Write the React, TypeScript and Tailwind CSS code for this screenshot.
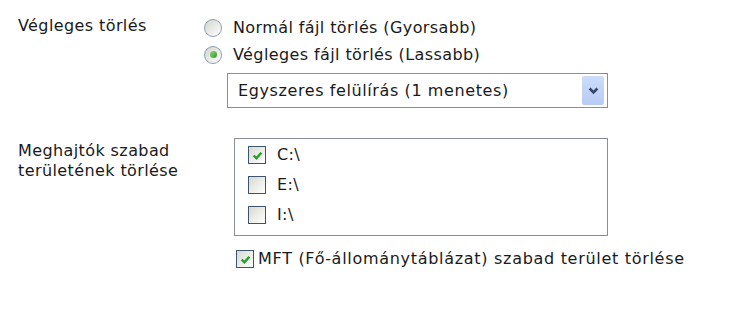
import * as React from "react";

function Radio({ checked }: { checked?: boolean }) {
  return (
    <span className="flex size-[18px] shrink-0 items-center justify-center rounded-full border border-[#8aa0b6] bg-gradient-to-br from-[#d4d4cc] to-white">
      {checked && (
        <span className="size-[7px] rounded-full bg-gradient-to-br from-[#8ad878] to-[#2a9a1e]" />
      )}
    </span>
  );
}

function Check({ checked }: { checked?: boolean }) {
  return (
    <span className="flex size-[18px] shrink-0 items-center justify-center border border-[#3d5670] bg-gradient-to-br from-[#d9d9d2] to-white">
      {checked && (
        <svg viewBox="0 0 10 10" className="size-[11px]">
          <path d="M1.5 5 L4 7.5 L8.5 2.5" fill="none" stroke="#21a121" strokeWidth="2.2" />
        </svg>
      )}
    </span>
  );
}

export default function App() {
  return (
    <div className="h-[318px] w-[744px] bg-white pl-[18px] pt-[14px] text-[16px] leading-[20px] tracking-[0.4px] text-[#1a1a1a] [font-family:'DejaVu_Sans',sans-serif]">
      <div className="flex">
        <div className="w-[186px] pt-[2px]">Végleges törlés</div>
        <div className="flex flex-col">
          <label className="flex h-[27px] items-center gap-[11px]">
            <Radio />
            <span>Normál fájl törlés (Gyorsabb)</span>
          </label>
          <label className="flex h-[27px] items-center gap-[11px]">
            <Radio checked />
            <span>Végleges fájl törlés (Lassabb)</span>
          </label>
          <div className="ml-[23px] mt-[5px] flex h-[35px] w-[381px] items-center border border-[#8a8f95] pl-[10px] pr-[3px]">
            <span className="flex-1 tracking-[0.6px]">Egyszeres felülírás (1 menetes)</span>
            <span className="flex h-[29px] w-[22px] items-center justify-center rounded-[2px] bg-gradient-to-b from-[#cddcfb] to-[#b8cbf4]">
              <svg viewBox="0 0 10 10" className="size-[11px]">
                <path d="M1.5 3.2 L5 6.7 L8.5 3.2" fill="none" stroke="#34476f" strokeWidth="2.4" />
              </svg>
            </span>
          </div>
        </div>
      </div>

      <div className="mt-[30px] flex">
        <div className="w-[206px] pt-[3px]">
          Meghajtók szabad
          <br />
          területének törlése
        </div>
        <div className="flex flex-col">
          <div className="ml-[10px] flex h-[98px] w-[374px] flex-col border border-[#8a8f95] pl-[13px] pt-[1px]">
            {[
              { d: "C:\\", c: true },
              { d: "E:\\", c: false },
              { d: "I:\\", c: false },
            ].map((r) => (
              <label key={r.d} className="flex h-[30px] items-center gap-[11px]">
                <Check checked={r.c} />
                <span>{r.d}</span>
              </label>
            ))}
          </div>
          <label className="ml-[12px] mt-[13px] flex h-[20px] items-center gap-[4px]">
            <Check checked />
            <span className="tracking-[0.7px]">MFT (Fő-állománytáblázat) szabad terület törlése</span>
          </label>
        </div>
      </div>
    </div>
  );
}
